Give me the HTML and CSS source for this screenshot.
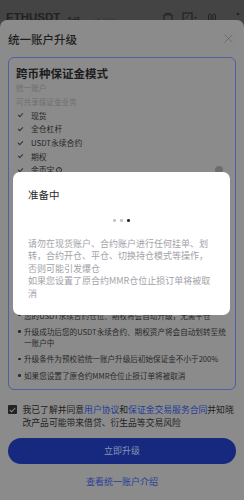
FILE: index.html
```html
<!DOCTYPE html>
<html lang="zh-CN">
<head>
<meta charset="utf-8">
<link rel="stylesheet" href="styles.css">
</head>
<body>
<div class="screen">
  <div class="topbar">
    <span class="sym">ETHUSDT</span>
    <span class="kind">永续</span>
    <span class="caret">▾</span>
    <span class="chg">+6.16%</span>
    <span class="tb-icons">
      <svg width="10" height="10" viewBox="0 0 10 10"><path d="M3 3V1.5h4V3M1 3h8v6H1z" fill="none" stroke="#222" stroke-width="1.2"/></svg>
      <svg width="16" height="10" viewBox="0 0 16 10"><rect x="1" y="1" width="9" height="8" fill="none" stroke="#222" stroke-width="1.2"/><path d="M3 7l4-4" stroke="#222" stroke-width="1"/><path d="M12 5h3l-1.5 2z" fill="#222"/></svg>
      <svg width="10" height="10" viewBox="0 0 10 10"><rect x="1.5" y="2" width="2.5" height="7" rx="1.2" fill="none" stroke="#222" stroke-width="1"/><rect x="6" y="2" width="2.5" height="7" rx="1.2" fill="none" stroke="#222" stroke-width="1"/></svg>
      <svg width="14" height="12" viewBox="0 0 14 12"><circle cx="12" cy="2" r="1.3" fill="#222"/><circle cx="2" cy="10" r="1" fill="#222"/><circle cx="6" cy="10" r="1" fill="#222"/><circle cx="10" cy="10" r="1" fill="#222"/></svg>
    </span>
  </div>

  <div class="sheet">
    <div class="sheet-head">
      <h1 class="sheet-title">统一账户升级</h1>
      <svg class="close" width="9" height="9" viewBox="0 0 9 9"><path d="M0.5 0.5l8 8M8.5 0.5l-8 8" stroke="#6a6a6a" stroke-width="0.9"/></svg>
    </div>

    <div class="card">
      <div class="card-title">跨币种保证金模式</div>
      <div class="sub">统一账户</div>
      <div class="sub">可共享保证金业务</div>
      <ul class="checks">
        <li><span class="tick"></span>现货</li>
        <li><span class="tick"></span>全仓杠杆</li>
        <li><span class="tick"></span>USDT永续合约</li>
        <li><span class="tick"></span>期权</li>
        <li class="row-between"><span class="yb"><span class="tick"></span>余币宝 <span class="info">i</span></span><span class="knob"></span></li>
      </ul>
      <div class="divider"></div>
      <div class="sec-title">升级须知</div>
      <ul class="bullets">
        <li>升级过程预计需要几分钟，请耐心等待</li>
        <li>升级前请确保账户中没有未完成的挂单</li>
        <li>升级期间部分功能将暂时不可用</li>
        <li>升级期间请勿进行划转、充值或提现操作</li>
        <li>升级完成后将无法切换回原账户模式</li>
        <li>您的USDT永续合约仓位、期权将会自动升级，无需平仓</li>
        <li>升级成功后您的USDT永续合约、期权资产将会自动划转至统一账户中</li>
        <li>升级条件为预校验统一账户升级后初始保证金不小于200%</li>
        <li>如果您设置了原合约MMR仓位止损订单将被取消</li>
      </ul>
    </div>

    <label class="agree">
      <span class="box"><svg width="7" height="6" viewBox="0 0 7 6"><path d="M0.8 3l1.9 1.8L6.2 1" fill="none" stroke="#8b8b8b" stroke-width="1.1"/></svg></span>
      <span class="agree-text">我已了解并同意<span class="lnk">用户协议</span>和<span class="lnk">保证金交易服务合同</span>并知晓改产品可能带来借贷、衍生品等交易风险</span>
    </label>

    <button class="primary">立即升级</button>
    <div class="intro">查看统一账户介绍</div>
  </div>

  <div class="dialog">
    <div class="dlg-title">准备中</div>
    <div class="dots"><span></span><span></span><span class="on"></span></div>
    <p class="dlg-text">请勿在现货账户、合约账户进行任何挂单、划转，合约开仓、平仓、切换持仓模式等操作，否则可能引发爆仓</p>
    <p class="dlg-text">如果您设置了原合约MMR仓位止损订单将被取消</p>
  </div>
</div>
</body>
</html>
```

FILE: styles.css
```css
* { box-sizing: border-box; }
html, body { margin: 0; padding: 0; }
body {
  width: 244px;
  height: 500px;
  overflow: hidden;
  background: #444444;
  font-family: "Noto Sans CJK SC", "Noto Sans", sans-serif;
}
.screen { position: relative; width: 244px; height: 500px; }

.topbar {
  height: 20px;
  overflow: hidden;
  display: flex;
  align-items: flex-start;
  padding: 10px 4px 0 6px;
  color: #222;
}
.sym { font-family: "Liberation Sans", sans-serif; font-weight: 700; font-size: 11.5px; line-height: 14px; }
.kind { font-size: 7px; line-height: 12px; margin: 4px 0 0 6px; font-weight: 700; }
.caret { font-size: 6px; line-height: 12px; margin: 5px 0 0 6px; }
.chg { font-family: "Liberation Sans", sans-serif; font-size: 7px; line-height: 12px; margin: 5px 0 0 3px; color: #333; }
.tb-icons { margin-left: auto; display: flex; gap: 9px; align-items: flex-start; padding-top: 2px; }

.sheet {
  height: 480px;
  background: #8b8b8b;
  border-radius: 7px 7px 0 0;
  padding: 0 8px;
}
.sheet-head {
  height: 37px;
  display: flex;
  align-items: center;
  justify-content: space-between;
  padding-right: 3px;
}
.sheet-title { margin: 0; font-size: 11.5px; font-weight: 500; color: #1e1e1e; }
.card {
  border: 1px solid #4f5ea6;
  border-radius: 6px;
  padding: 7px 8px 8px 7px;
}
.card-title { font-size: 11.5px; font-weight: 700; line-height: 16px; color: #1c1c1c; }
.sub { font-size: 7.6px; line-height: 14px; color: #6e6e6e; }
.checks { list-style: none; margin: -0.5px 0 0; padding: 0; }
.checks li { display: flex; align-items: center; font-size: 7.8px; line-height: 13.7px; color: #262626; }
.tick {
  width: 5px; height: 3px;
  border-left: 1px solid #333; border-bottom: 1px solid #333;
  transform: rotate(-45deg);
  margin: 0 8px 1px 2px;
}
.row-between { justify-content: space-between; }
.yb { display: flex; align-items: center; }
.info { display: inline-flex; width: 6px; height: 6px; border: 0.8px solid #333; border-radius: 50%; font-size: 4px; align-items: center; justify-content: center; margin-left: 2px; }
.knob { width: 8px; height: 8px; border-radius: 50%; background: #6d6d6d; margin-right: 4px; }
.divider { height: 1px; background: #7d7d7d; margin: 16px 0 15px; }
.sec-title { font-size: 8.5px; line-height: 14px; color: #262626; font-weight: 700; margin-bottom: 5px; }
.bullets { list-style: none; margin: 0; padding: 0 0 0 8px; display: flex; flex-direction: column; gap: 5px; }
.bullets li { position: relative; font-size: 7.6px; line-height: 11.3px; color: #282828; padding-right: 1px; }
.bullets li::before {
  content: ""; position: absolute; left: -6px; top: 4.3px;
  width: 2.6px; height: 2.6px; border-radius: 50%; background: #2a2a2a;
}

.agree { display: flex; align-items: flex-start; margin-top: 13px; margin-right: -4px; gap: 6px; }
.box { flex: none; width: 8.5px; height: 8.5px; background: #232323; border-radius: 1px; display: flex; align-items: center; justify-content: center; margin-top: 2.5px; }
.agree-text { font-size: 8.8px; line-height: 13px; color: #222; }
.lnk { color: #233b98; }

.primary {
  display: block; width: 100%; height: 26px; margin-top: 9px;
  border: none; border-radius: 13px; background: #16297e;
  color: #8a92b6; font-family: inherit; font-size: 9px;
}
.intro { text-align: center; font-size: 9px; line-height: 14px; color: #2a3f98; margin-top: 11px; }

.dialog {
  position: absolute; left: 13px; top: 172px; width: 217px; height: 143px;
  background: #ffffff; border-radius: 7px;
  padding: 16px 15px 0 15px;
}
.dlg-title { font-size: 10.5px; line-height: 14px; color: #2b2b2b; }
.dots { display: flex; justify-content: center; gap: 4.5px; margin-top: 17px; }
.dots span { width: 2.6px; height: 2.6px; border-radius: 50%; background: #c4c4cc; }
.dots span.on { background: #2e2e2e; }
.dlg-text { margin: 0; font-size: 9px; line-height: 12.5px; color: #a2a2a8; }
.dots + .dlg-text { margin-top: 16px; }
```
